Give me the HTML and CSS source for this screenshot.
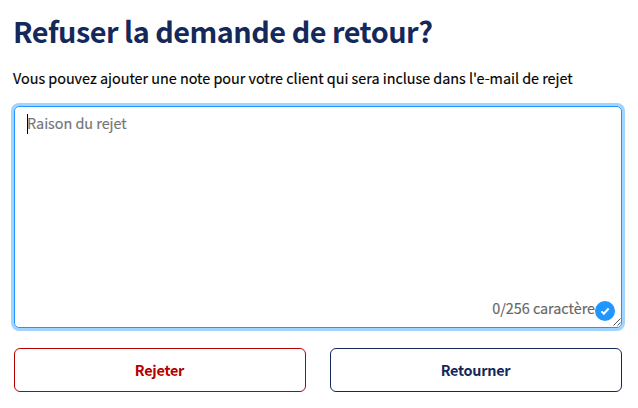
FILE: index.html
```html
<!DOCTYPE html>
<html lang="fr">
<head>
<meta charset="utf-8">
<title>Refuser la demande de retour?</title>
<link rel="stylesheet" href="styles.css">
</head>
<body>
<main class="dialog">
  <h1 class="title">Refuser la demande de retour?</h1>
  <p class="intro">Vous pouvez ajouter une note pour votre client qui sera incluse dans l'e-mail de rejet</p>
  <div class="note">
    <div class="placeholder"><i class="caret"></i><span>Raison du rejet</span></div>
    <div class="counter">
      <span>0/256 caractère</span>
      <svg class="check" viewBox="0 0 20 20"><circle cx="10" cy="10" r="10" fill="#2196ff"/><path d="M6.4 10.4 8.8 12.7 13.6 7.5" fill="none" stroke="#fff" stroke-width="2"/></svg>
    </div>
    <svg class="grip" viewBox="0 0 8 8"><path d="M.5 7.5l7-7M4.5 7.5l3-3" fill="none" stroke="#444" stroke-width=".9"/></svg>
  </div>
  <div class="actions">
    <button class="btn reject">Rejeter</button>
    <button class="btn back">Retourner</button>
  </div>
</main>
</body>
</html>
```
FILE: styles.css
```css
* { box-sizing: border-box; }
body {
  margin: 0;
  background: #fff;
  color: #000;
  font-family: "Noto Sans CJK SC", "Noto Sans", sans-serif;
  font-size: 14.4px;
  letter-spacing: -0.025px;
  -webkit-text-stroke: 0.15px;
}
.dialog { padding: 9px 16px 16px 14px; }
.title {
  margin: 0 0 0 -1px;
  height: 44px;
  line-height: 44px;
  font-size: 28.8px;
  font-weight: 700;
  letter-spacing: -0.49px;
  -webkit-text-stroke: 0;
  color: #14295a;
  white-space: nowrap;
}
.intro {
  margin: 13px 0 0 -1px;
  height: 24px;
  line-height: 24px;
  white-space: nowrap;
}
.note {
  position: relative;
  display: flex;
  flex-direction: column;
  justify-content: space-between;
  height: 222px;
  margin-top: 16px;
  padding: 5px 6px 6px 12px;
  border: 1px solid #2196ff;
  border-radius: 5px;
  box-shadow: 0 0 0 3px #a3d3ff;
  color: #757575;
}
.placeholder { display: flex; align-items: center; height: 24px; }
.placeholder span { height: 24px; line-height: 22px; }
.caret { width: 1px; height: 20px; margin-right: -1px; background: #000; }
.counter {
  display: flex;
  align-items: center;
  justify-content: flex-end;
  height: 24px;
  color: #666;
}
.counter span { height: 24px; line-height: 22px; }
.check { width: 20px; height: 20px; margin-top: 4px; }
.grip { position: absolute; right: 0; bottom: 1px; width: 8px; height: 8px; }
.actions {
  display: grid;
  grid-template-columns: 1fr 1fr;
  gap: 24px;
  margin-top: 20px;
}
.btn {
  height: 44px;
  padding: 0 1px 0 0;
  border: 1px solid;
  border-radius: 6px;
  background: #fff;
  font: 700 14.4px/24px "Noto Sans CJK SC", "Noto Sans", sans-serif;
  letter-spacing: -0.25px;
  -webkit-text-stroke: 0;
}
.reject { color: #b50000; }
.back { color: #14295a; }
```
